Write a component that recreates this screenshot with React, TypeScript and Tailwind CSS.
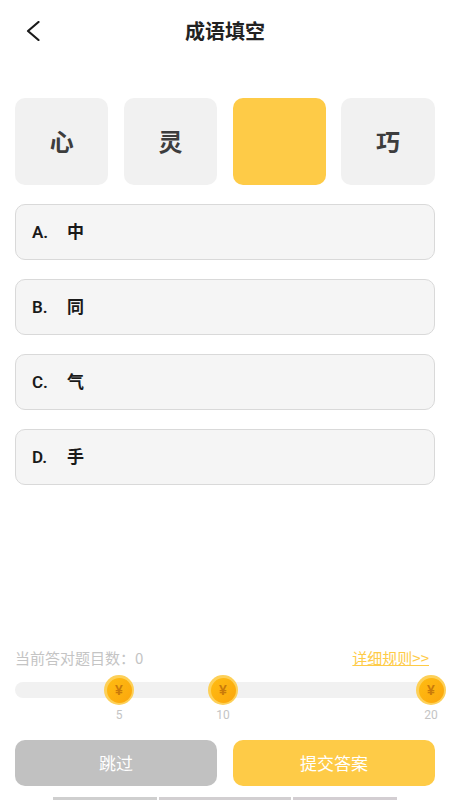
const cjk = { fontFamily: '"Noto Sans CJK SC", sans-serif' };

function Coin() {
  return (
    <div className="w-[30px] h-[30px] rounded-full bg-[#fdd058] flex items-center justify-center">
      <div className="w-[25px] h-[25px] rounded-full bg-linear-to-br from-[#ffbc12] to-[#fba60c] flex items-center justify-center">
        <span className="text-[14px] leading-none font-bold text-[#c97a0a]" style={{ fontFamily: '"Liberation Sans", sans-serif' }}>¥</span>
      </div>
    </div>
  );
}

const tiles = ["心", "灵", "", "巧"];
const options = [["A.", "中"], ["B.", "同"], ["C.", "气"], ["D.", "手"]];

export default function App() {
  return (
    <div className="w-[450px] h-[800px] bg-white flex flex-col overflow-hidden" style={cjk}>
      <header className="relative h-[61px] flex items-center justify-center shrink-0">
        <svg className="absolute left-[25px] top-[21px]" width="16" height="20" viewBox="0 0 16 20" fill="none">
          <path d="M13.5 1 L3 10 L13.5 19" stroke="#1a1a1a" strokeWidth="2.2" strokeLinecap="round" strokeLinejoin="round" />
        </svg>
        <h1 className="text-[20px] leading-none font-bold text-[#222]">成语填空</h1>
      </header>

      <div className="mt-[37px] pl-[15px] pr-[15.3px] grid grid-cols-4 gap-[15.3px]">
        {tiles.map((t, i) => (
          <div
            key={i}
            className={`h-[86.5px] rounded-[10px] flex items-center justify-center text-[24px] font-bold text-[#3d3d3d] ${t ? "bg-[#f1f1f1]" : "bg-[#fecb47]"}`}
          >
            {t}
          </div>
        ))}
      </div>

      <div className="mt-[19px] px-[15px] flex flex-col gap-[19px]">
        {options.map(([k, v]) => (
          <div key={k} className="h-[56px] rounded-[10px] border border-[#d9d9d9] bg-[#f5f5f5] flex items-center pl-[16px] text-[16px] leading-[24px] font-bold text-[#1a1a1a]">
            <span className="w-[35px] leading-[24px] text-[17px] font-semibold mt-[1px]" style={{ fontFamily: 'Roboto, sans-serif' }}>{k}</span>
            <span className="text-[17px] font-semibold leading-[24px] -mt-[2px]">{v}</span>
          </div>
        ))}
      </div>

      <div className="mt-[163.5px] px-[15px] flex items-center justify-between h-[20px]">
        <span className="text-[15px] text-[#c4c4c4]">当前答对题目数：0</span>
        <span className="mr-[6px] text-[15px] text-[#fecb47] underline">详细规则&gt;&gt;</span>
      </div>

      <div className="relative mt-[14px] mx-[15px] h-[16px] rounded-full bg-[#f1f1f1]">
        <div className="absolute left-[89px] top-[-7px]"><Coin /></div>
        <div className="absolute left-[193px] top-[-7px]"><Coin /></div>
        <div className="absolute left-[401px] top-[-7px]"><Coin /></div>
      </div>

      <div className="relative mt-[8px] mx-[15px] h-[18px] text-[12px] text-[#c4c4c4]" style={{ fontFamily: 'Roboto, sans-serif' }}>
        <span className="absolute left-[84px] w-[40px] text-center">5</span>
        <span className="absolute left-[188px] w-[40px] text-center">10</span>
        <span className="absolute left-[396px] w-[40px] text-center">20</span>
      </div>

      <div className="mt-[16px] px-[15px] flex gap-[16px]">
        <button className="flex-1 h-[46px] rounded-[10px] bg-[#c1c1c1] text-white text-[17px]">跳过</button>
        <button className="flex-1 h-[46px] rounded-[10px] bg-[#fecb47] text-white text-[17px]">提交答案</button>
      </div>

      <div className="mt-[11px] ml-[53px] flex gap-[2px] h-[3px]">
        <div className="w-[104px] bg-[#cfcfcf]" />
        <div className="w-[132px] bg-[#d2cfd1]" />
        <div className="w-[104px] bg-[#d3ced2]" />
      </div>
    </div>
  );
}
